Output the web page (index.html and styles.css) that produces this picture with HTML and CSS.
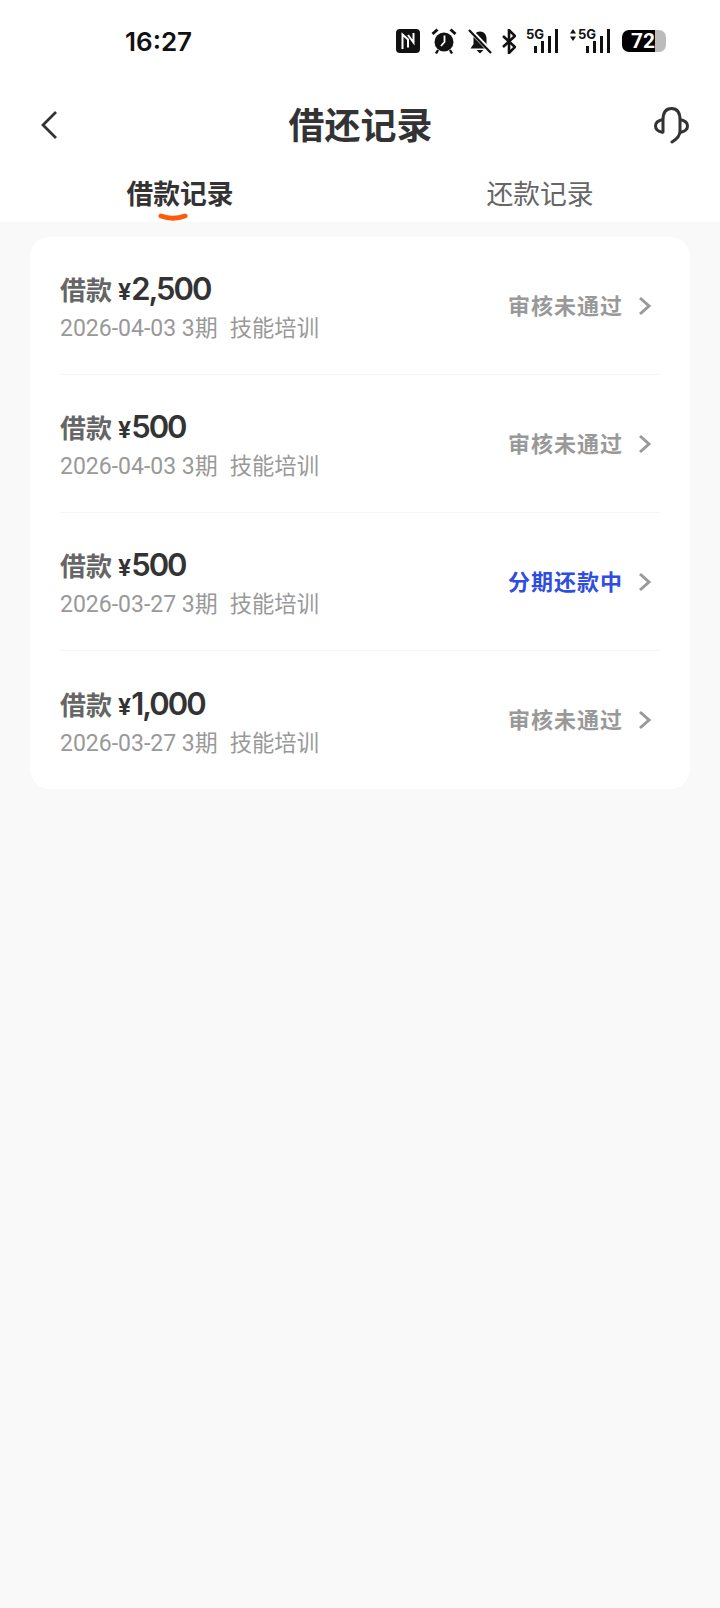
FILE: index.html
```html
<!DOCTYPE html>
<html lang="zh-CN">
<head>
    <meta charset="UTF-8">
    <meta name="viewport" content="width=device-width, initial-scale=1.0">
    <title>借还记录</title>
    <link rel="stylesheet" href="styles.css">
</head>
<body>
    <!-- Статус-бар -->
    <div class="status-bar">
        <div class="status-time">16:27</div>
        <div class="status-icons">
            <svg width="24" height="24" viewBox="0 0 24 24">
                <rect width="24" height="24" rx="4" fill="#111"/>
                <path d="M6.5 20V5.5l5.500 5V18.500M12 6l5.500 7.500V4" fill="none" stroke="#fff" stroke-width="2"/>
            </svg>
            <svg width="28" height="26" viewBox="0 0 28 26">
                <circle cx="14" cy="14" r="9.500" fill="#111"/>
                <path d="M14.500 7.500v6.500l-3.500 4" fill="none" stroke="#fff" stroke-width="1.800"/>
                <path d="M2.500 6l5-4.500M25.500 6l-5-4.500" stroke="#111" stroke-width="3"/>
                <path d="M8 22l-2 3.500M20 22l2 3.500" stroke="#111" stroke-width="2.400"/>
            </svg>
            <svg width="24" height="25" viewBox="0 0 24 25">
                <path d="M12 2.500c-4 0-6.500 3-6.500 7v5.500l-3 4.500h19l-3-4.500V9.500c0-4-2.500-7-6.500-7z" fill="#111"/>
                <path d="M8.500 21h7l-3.500 3.500z" fill="#111"/>
                <path d="M1 0l23 24" stroke="#fff" stroke-width="4.500"/>
                <path d="M1 1l22 23" stroke="#111" stroke-width="2.200"/>
            </svg>
            <svg width="14" height="25" viewBox="0 0 14 25">
                <path d="M1 7l12 11-6 6V1l6 6L1 18" fill="none" stroke="#111" stroke-width="2.600"/>
            </svg>
            <div class="signal">
                <span class="signal-label">5G</span>
                <div class="signal-bars">
                    <i class="bar-1"></i><i class="bar-2"></i><i class="bar-3"></i><i class="bar-4"></i>
                </div>
            </div>
            <div class="signal signal-data">
                <svg class="signal-arrows" width="6" height="12" viewBox="0 0 6 12">
                    <path d="M3 0l3 4.500H0zM3 12l3-4.500H0z" fill="#111"/>
                </svg>
                <span class="signal-label">5G</span>
                <div class="signal-bars">
                    <i class="bar-1"></i><i class="bar-2"></i><i class="bar-3"></i><i class="bar-4"></i>
                </div>
            </div>
            <div class="battery">
                <div class="battery-body">72</div>
                <div class="battery-rest"></div>
            </div>
        </div>
    </div>

    <!-- Заголовок -->
    <div class="nav-bar">
        <svg class="nav-icon" width="38" height="38" viewBox="0 0 38 38">
            <path d="M26 6L13 19l13 13" fill="none" stroke="#333" stroke-width="2.800"/>
        </svg>
        <div class="nav-title">借还记录</div>
        <svg class="nav-icon" width="38" height="38" viewBox="0 0 38 38">
            <path d="M10 26V14C10 6 13 2.500 18.500 2.500S27 6 27 14v11c0 5-3 8-8 11" fill="none" stroke="#333" stroke-width="3" stroke-linecap="round"/>
            <path d="M10 13.500C5 14.500 2.500 17 2.500 20s2.500 5.500 7.500 6.500M27 13.500c5 1 7.500 3.500 7.500 6.500s-2.500 5.500-7.500 6.500" fill="none" stroke="#333" stroke-width="3"/>
        </svg>
    </div>

    <!-- Вкладки -->
    <div class="tabs">
        <div class="tab tab-active">借款记录
            <svg class="tab-mark" width="30" height="9" viewBox="0 0 30 9">
                <path d="M3 3Q15 7.500 27 3" fill="none" stroke="#ff5a0a" stroke-width="5" stroke-linecap="round"/>
            </svg>
        </div>
        <div class="tab">还款记录</div>
    </div>

    <div class="content">
        <div class="card">
            <div class="row">
                <div class="row-info">
                    <div class="row-title"><span class="row-label">借款</span><span class="row-yen">¥</span><span class="row-amount">2,500</span></div>
                    <div class="row-sub">2026-04-03 3期<span class="row-purpose">技能培训</span></div>
                </div>
                <div class="row-status">审核未通过</div>
                <svg class="row-arrow" width="14" height="20" viewBox="0 0 14 20"><path d="M2 2l9 8-9 8" fill="none" stroke="#999" stroke-width="3"/></svg>
            </div>
            <div class="row">
                <div class="row-info">
                    <div class="row-title"><span class="row-label">借款</span><span class="row-yen">¥</span><span class="row-amount">500</span></div>
                    <div class="row-sub">2026-04-03 3期<span class="row-purpose">技能培训</span></div>
                </div>
                <div class="row-status">审核未通过</div>
                <svg class="row-arrow" width="14" height="20" viewBox="0 0 14 20"><path d="M2 2l9 8-9 8" fill="none" stroke="#999" stroke-width="3"/></svg>
            </div>
            <div class="row">
                <div class="row-info">
                    <div class="row-title"><span class="row-label">借款</span><span class="row-yen">¥</span><span class="row-amount">500</span></div>
                    <div class="row-sub">2026-03-27 3期<span class="row-purpose">技能培训</span></div>
                </div>
                <div class="row-status status-active">分期还款中</div>
                <svg class="row-arrow" width="14" height="20" viewBox="0 0 14 20"><path d="M2 2l9 8-9 8" fill="none" stroke="#999" stroke-width="3"/></svg>
            </div>
            <div class="row">
                <div class="row-info">
                    <div class="row-title"><span class="row-label">借款</span><span class="row-yen">¥</span><span class="row-amount">1,000</span></div>
                    <div class="row-sub">2026-03-27 3期<span class="row-purpose">技能培训</span></div>
                </div>
                <div class="row-status">审核未通过</div>
                <svg class="row-arrow" width="14" height="20" viewBox="0 0 14 20"><path d="M2 2l9 8-9 8" fill="none" stroke="#999" stroke-width="3"/></svg>
            </div>
        </div>
    </div>
</body>
</html>
```

FILE: styles.css
```css
* {
    margin: 0;
    padding: 0;
    box-sizing: border-box;
}
html, body {
    height: 100%;
    overflow: hidden;
}
body {
    display: flex;
    flex-direction: column;
    background-color: #fff;
    color: #333;
    font-family: Inter, "Noto Sans CJK SC", sans-serif;
}
.status-bar {
    display: flex;
    justify-content: space-between;
    align-items: center;
    height: 82px;
    padding: 0 54px 0 125px;
}
.status-time {
    font-size: 26px;
    font-weight: 600;
    color: #111;
}
.status-icons {
    display: flex;
    align-items: center;
    gap: 10px;
}
.signal {
    position: relative;
    display: flex;
    justify-content: flex-end;
    width: 32px;
    height: 24px;
}
.signal-data {
    width: 42px;
}
.signal-label {
    position: absolute;
    top: -1px;
    left: 0;
    font-size: 13px;
    font-weight: 700;
    line-height: 13px;
    color: #111;
}
.signal-data .signal-label {
    left: 10px;
}
.signal-arrows {
    position: absolute;
    top: 0;
    left: 2px;
}
.signal-bars {
    display: flex;
    align-items: flex-end;
    gap: 4px;
    height: 24px;
}
.signal-bars i {
    display: block;
    width: 3px;
    background-color: #111;
}
.bar-1 { height: 7px; }
.bar-2 { height: 12px; }
.bar-3 { height: 17px; }
.bar-4 { height: 24px; }
.battery {
    display: flex;
    align-items: center;
    margin-left: 2px;
}
.battery-body {
    width: 33px;
    height: 22px;
    border-radius: 7px 0 0 7px;
    background-color: #000;
    color: #fff;
    font-family: Roboto, sans-serif;
    font-size: 21px;
    font-weight: 700;
    line-height: 22px;
    text-align: right;
}
.battery-rest {
    width: 11px;
    height: 22px;
    border-radius: 0 7px 7px 0;
    background-color: #bbb;
}
.nav-bar {
    display: flex;
    justify-content: space-between;
    align-items: center;
    height: 82px;
    padding: 0 29px 0 30px;
}
.nav-icon {
    margin-top: 3px;
}
.nav-title {
    font-size: 36px;
    font-weight: 700;
    color: #333;
}
.tabs {
    display: flex;
    height: 58px;
}
.tab {
    position: relative;
    flex: 1;
    text-align: center;
    font-size: 26.800px;
    line-height: 61px;
    color: #666;
}
.tab-active {
    font-weight: 700;
    color: #333;
}
.tab-mark {
    position: absolute;
    top: 49px;
    left: 158px;
}
.content {
    flex: 1;
    padding: 15px 30px;
    background-color: #f9f9f9;
}
.card {
    border-radius: 20px;
    background-color: #fff;
}
.row {
    display: flex;
    align-items: center;
    height: 138px;
    margin: 0 30px;
    border-bottom: 1px solid #f6f6f6;
}
.row:last-child {
    border-bottom: none;
}
.row-info {
    flex: 1;
    padding-top: 3px;
}
.row-title {
    display: flex;
    align-items: baseline;
    height: 40px;
    line-height: 40px;
}
.row-label {
    font-size: 26px;
    font-weight: 700;
    color: #666;
}
.row-yen {
    margin-left: 6px;
    font-size: 23px;
    font-weight: 700;
}
.row-amount {
    font-size: 31px;
    font-weight: 600;
    letter-spacing: -2px;
}
.row-sub {
    margin-top: 3px;
    font-family: Roboto, "Noto Sans CJK SC", sans-serif;
    font-size: 23px;
    line-height: 32px;
    color: #999;
}
.row-purpose {
    margin-left: 12px;
    font-size: 22.300px;
}
.row-status {
    padding-bottom: 4px;
    font-size: 22px;
    font-weight: 700;
    letter-spacing: 1px;
    color: #999;
}
.status-active {
    color: #2f4de0;
}
.row-arrow {
    margin: 0 8px 0 15px;
}
```
